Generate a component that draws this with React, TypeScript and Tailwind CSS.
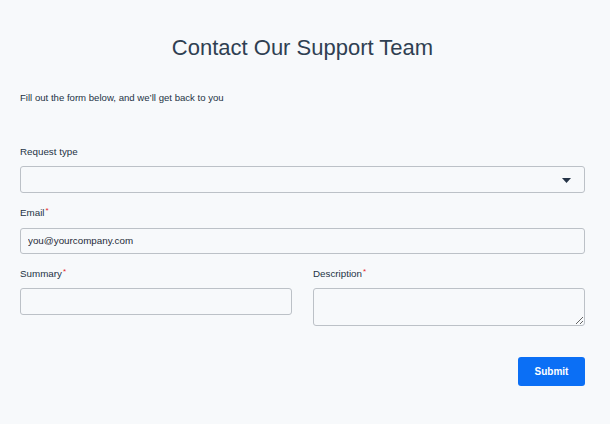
import React from 'react';

const Label = ({ text, required }: { text: string; required?: boolean }) => (
  <label className="flex h-[12px] items-start text-[9.8px] leading-[12px] text-[#243345] mb-[8px]">
    {text}
    {required && <span className="text-[#e5252a] text-[8px] leading-[8px] ml-[1px]">*</span>}
  </label>
);

const inputCls =
  'w-full rounded-[3px] border border-[#bcc1c7] bg-[#f7f9fb] px-[7px] text-[9.8px] text-[#1f2a37] outline-none';

export default function App() {
  return (
    <div
      className="min-h-[424px] w-full bg-[#f7f9fb] pl-[20px] pr-[25px] pt-[34px]"
      style={{ fontFamily: '"Liberation Sans", Arial, sans-serif' }}
    >
      <h1 className="text-center text-[22px] leading-[28px] font-light text-[#2f3f52]">
        Contact Our Support Team
      </h1>
      <p className="mt-[30px] text-[9.6px] leading-[12px] text-[#243345]">
        Fill out the form below, and we’ll get back to you
      </p>

      <form className="mt-[42px]" onSubmit={(e) => e.preventDefault()}>
        <div>
          <Label text="Request type" />
          <div className="relative">
            <div className={inputCls + ' h-[27px]'} />
            <svg
              className="absolute right-[14px] top-[12px]"
              width="9"
              height="5"
              viewBox="0 0 9 5"
            >
              <path d="M0 0h9L4.5 5z" fill="#253447" />
            </svg>
          </div>
        </div>

        <div className="mt-[14px]">
          <Label text="Email" required />
          <input className={inputCls + ' h-[26px]'} defaultValue="you@yourcompany.com" />
        </div>

        <div className="mt-[14px] grid grid-cols-2 gap-[21px]">
          <div>
            <Label text="Summary" required />
            <input className={inputCls + ' h-[27px]'} />
          </div>
          <div>
            <Label text="Description" required />
            <textarea className={inputCls + ' block h-[38px] py-[4px]'} />
          </div>
        </div>

        <div className="mt-[31px] flex justify-end">
          <button
            type="submit"
            className="h-[29px] w-[67px] rounded-[3px] bg-[#0b6ff5] text-[10px] font-bold text-white"
          >
            Submit
          </button>
        </div>
      </form>
    </div>
  );
}
